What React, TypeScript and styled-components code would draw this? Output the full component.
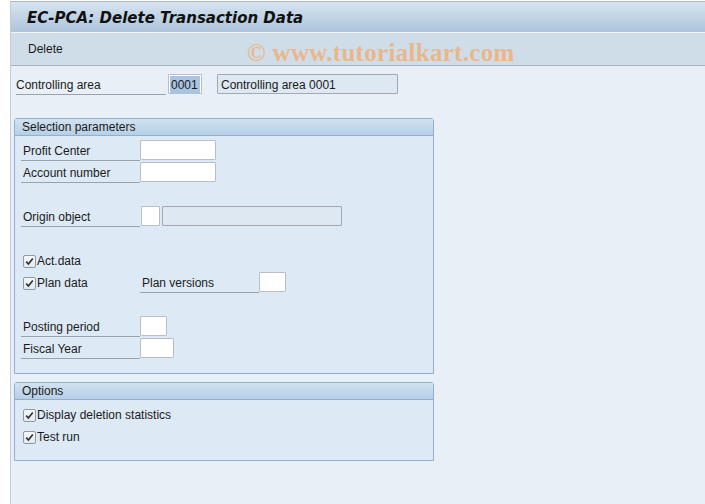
import React from "react";
import styled, { createGlobalStyle } from "styled-components";

const Global = createGlobalStyle`
  html, body { margin: 0; padding: 0; background: #ffffff; }
  body { font-family: "Liberation Sans", Arial, sans-serif; font-size: 12px; color: #1b1b1b; }
  * { box-sizing: border-box; }
`;

const Page = styled.div`
  width: 705px;
  height: 504px;
  display: flex;
  background: #ffffff;
  overflow: hidden;
`;

const Gutter = styled.div`
  width: 10px;
  flex: none;
`;

const Main = styled.div`
  flex: 1;
  display: flex;
  flex-direction: column;
  margin-top: 1px;
  border-top: 1px solid #aab6c3;
  border-left: 1px solid #c3cbd3;
  background: #e8eff6;
`;

const TitleBar = styled.div`
  height: 30px;
  display: flex;
  align-items: center;
  padding: 2px 0 0 16px;
  background: linear-gradient(#d6e4ef, #adc4db);
`;

const Title = styled.h1`
  margin: 0;
  font-family: "DejaVu Sans", "Liberation Sans", sans-serif;
  font-size: 15px;
  font-weight: bold;
  font-style: italic;
  color: #111;
`;

const Toolbar = styled.div`
  position: relative;
  height: 34px;
  display: flex;
  align-items: center;
  padding-left: 17px;
  background: #cfdde8;
  border-top: 1px solid #f2f6fa;
  border-bottom: 1px solid #a7b3bf;
`;

const ToolButton = styled.span`
  font-size: 12px;
  color: #1b1b1b;
`;

const Watermark = styled.span`
  position: absolute;
  left: 236px;
  top: 6px;
  font-family: "Liberation Serif", "Times New Roman", serif;
  font-weight: bold;
  font-size: 25px;
  letter-spacing: 0.3px;
  color: #eab78b;
  white-space: nowrap;
`;

const Content = styled.div`
  flex: 1;
  display: flex;
  flex-direction: column;
  padding: 8px 0 0 3px;
`;

const TopRow = styled.div`
  display: flex;
  align-items: center;
  height: 21px;
  padding-left: 2px;
  margin-bottom: 23px;
`;

const Label = styled.div<{ $w: number }>`
  width: ${(p) => p.$w}px;
  height: 21px;
  display: flex;
  align-items: center;
  padding: 1px 0 0 2px;
  border-bottom: 1px solid #9aa3ad;
  flex: none;
`;

const TopLabel = styled(Label)`
  padding-left: 0;
`;

const Input = styled.div<{ $w: number; $ml?: number; $tone?: "white" | "grey" }>`
  width: ${(p) => p.$w}px;
  height: 20px;
  margin-left: ${(p) => p.$ml ?? 0}px;
  flex: none;
  display: flex;
  align-items: center;
  padding: 1px 0 0 3px;
  font-size: 12px;
  background: ${(p) => (p.$tone === "grey" ? "#dde8f2" : "#ffffff")};
  border: 1px solid ${(p) => (p.$tone === "grey" ? "#a3a9b0" : "#b8bec6")};
  border-radius: 1px;
  align-self: flex-start;
`;

const Selected = styled.span`
  background: #a8c4e2;
  padding: 2px 2px 2px 1px;
  margin-left: -2px;
  color: #1b1b1b;
`;

const Group = styled.section<{ $h: number }>`
  width: 420px;
  height: ${(p) => p.$h}px;
  margin-bottom: 8px;
  border: 1px solid #8fb0d2;
  border-radius: 3px 3px 0 0;
  background: #dde9f4;
  display: flex;
  flex-direction: column;
`;

const GroupHeader = styled.div`
  height: 17px;
  display: flex;
  align-items: center;
  padding-left: 7px;
  background: linear-gradient(#d2e2f0, #b7cfe6);
  border-bottom: 1px solid #8fb0d2;
`;

const GroupBody = styled.div`
  display: flex;
  flex-direction: column;
  padding: 3px 0 0 6px;
`;

const Row = styled.div`
  height: 22px;
  display: flex;
  align-items: flex-start;
  padding-top: 1px;
`;

const CheckItem = styled.label<{ $w?: number }>`
  width: ${(p) => (p.$w ? `${p.$w}px` : "auto")};
  height: 21px;
  display: flex;
  align-items: center;
  padding: 1px 0 0 2px;
  gap: 1px;
  flex: none;
`;

const Box = styled.span`
  width: 13px;
  height: 13px;
  border: 1px solid #8e9aa8;
  border-radius: 2px;
  background: linear-gradient(#f4f7fa, #e3e9ef);
  display: flex;
  align-items: center;
  justify-content: center;
`;

const Check = () => (
  <Box>
    <svg width="9" height="9" viewBox="0 0 9 9">
      <path d="M1.2 4.6 L3.4 7 L7.8 1.4" fill="none" stroke="#2a2f36" strokeWidth="1.6" />
    </svg>
  </Box>
);

export default function App() {
  return (
    <>
      <Global />
      <Page>
        <Gutter />
        <Main>
          <TitleBar>
            <Title>EC-PCA: Delete Transaction Data</Title>
          </TitleBar>
          <Toolbar>
            <ToolButton>Delete</ToolButton>
            <Watermark>© www.tutorialkart.com</Watermark>
          </Toolbar>
          <Content>
            <TopRow>
              <TopLabel $w={150}>Controlling area</TopLabel>
              <Input $w={34} $ml={2}><Selected>0001</Selected></Input>
              <Input $w={181} $ml={15} $tone="grey">Controlling area 0001</Input>
            </TopRow>

            <Group $h={256}>
              <GroupHeader>Selection parameters</GroupHeader>
              <GroupBody>
                <Row>
                  <Label $w={119}>Profit Center</Label>
                  <Input $w={76} />
                </Row>
                <Row>
                  <Label $w={119}>Account number</Label>
                  <Input $w={76} />
                </Row>
                <Row />
                <Row>
                  <Label $w={119}>Origin object</Label>
                  <Input $w={19} $ml={1} />
                  <Input $w={180} $ml={2} $tone="grey" />
                </Row>
                <Row />
                <Row>
                  <CheckItem><Check />Act.data</CheckItem>
                </Row>
                <Row>
                  <CheckItem $w={119}><Check />Plan data</CheckItem>
                  <Label $w={119}>Plan versions</Label>
                  <Input $w={27} />
                </Row>
                <Row />
                <Row>
                  <Label $w={119}>Posting period</Label>
                  <Input $w={27} />
                </Row>
                <Row>
                  <Label $w={119}>Fiscal Year</Label>
                  <Input $w={34} />
                </Row>
              </GroupBody>
            </Group>

            <Group $h={79}>
              <GroupHeader>Options</GroupHeader>
              <GroupBody>
                <Row>
                  <CheckItem><Check />Display deletion statistics</CheckItem>
                </Row>
                <Row>
                  <CheckItem><Check />Test run</CheckItem>
                </Row>
              </GroupBody>
            </Group>
          </Content>
        </Main>
      </Page>
    </>
  );
}
